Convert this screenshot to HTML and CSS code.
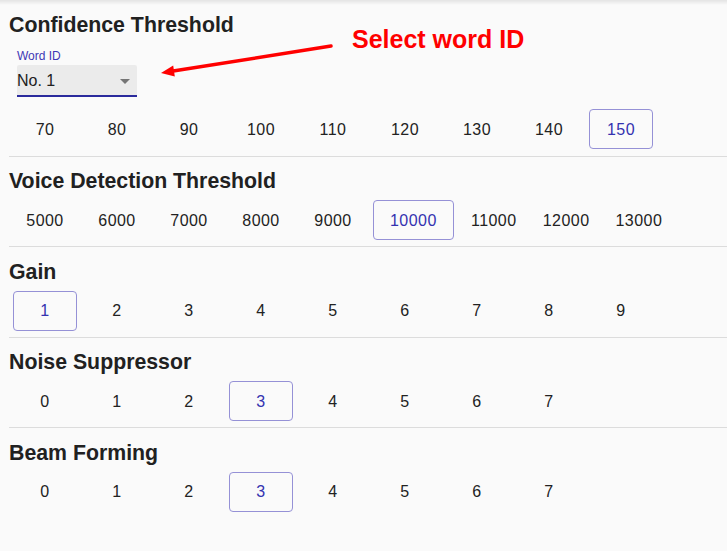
FILE: index.html
```html
<!DOCTYPE html>
<html lang="en">
<head>
<meta charset="utf-8">
<title>Settings</title>
<link rel="stylesheet" href="styles.css">
</head>
<body>
<div class="topshade"></div>
<main class="panel">
  <section class="setting first">
    <h2 class="title">Confidence Threshold</h2>
    <div class="field">
      <span class="field-label">Word ID</span>
      <div class="select">
        <span class="select-value">No. 1</span>
        <svg class="select-icon" width="10" height="5" viewBox="0 0 10 5"><path d="M0 0l5 5 5-5z" fill="#757575"/></svg>
      </div>
    </div>
    <div class="options">
      <button class="opt">70</button>
      <button class="opt">80</button>
      <button class="opt">90</button>
      <button class="opt">100</button>
      <button class="opt">110</button>
      <button class="opt">120</button>
      <button class="opt">130</button>
      <button class="opt">140</button>
      <button class="opt selected">150</button>
    </div>
  </section>
  <hr class="divider">
  <section class="setting">
    <h2 class="title">Voice Detection Threshold</h2>
    <div class="options">
      <button class="opt">5000</button>
      <button class="opt">6000</button>
      <button class="opt">7000</button>
      <button class="opt">8000</button>
      <button class="opt">9000</button>
      <button class="opt selected">10000</button>
      <button class="opt">11000</button>
      <button class="opt">12000</button>
      <button class="opt">13000</button>
    </div>
  </section>
  <hr class="divider">
  <section class="setting">
    <h2 class="title">Gain</h2>
    <div class="options">
      <button class="opt selected">1</button>
      <button class="opt">2</button>
      <button class="opt">3</button>
      <button class="opt">4</button>
      <button class="opt">5</button>
      <button class="opt">6</button>
      <button class="opt">7</button>
      <button class="opt">8</button>
      <button class="opt">9</button>
    </div>
  </section>
  <hr class="divider">
  <section class="setting">
    <h2 class="title">Noise Suppressor</h2>
    <div class="options">
      <button class="opt">0</button>
      <button class="opt">1</button>
      <button class="opt">2</button>
      <button class="opt selected">3</button>
      <button class="opt">4</button>
      <button class="opt">5</button>
      <button class="opt">6</button>
      <button class="opt">7</button>
    </div>
  </section>
  <hr class="divider">
  <section class="setting">
    <h2 class="title">Beam Forming</h2>
    <div class="options">
      <button class="opt">0</button>
      <button class="opt">1</button>
      <button class="opt">2</button>
      <button class="opt selected">3</button>
      <button class="opt">4</button>
      <button class="opt">5</button>
      <button class="opt">6</button>
      <button class="opt">7</button>
    </div>
  </section>
</main>
<div class="annotation">
  <svg class="annotation-arrow" width="727" height="100" viewBox="0 0 727 100">
    <line x1="331" y1="46" x2="170" y2="71.6" stroke="#ff0000" stroke-width="3.5" stroke-linecap="round"/>
    <polygon points="161,73 173.2,65.6 174.8,76.4" fill="#ff0000"/>
  </svg>
  <span class="annotation-text">Select word ID</span>
</div>
</body>
</html>
```

FILE: styles.css
```css
html, body {
  margin: 0;
  padding: 0;
}

body {
  background: #fafafa;
  font-family: "Liberation Sans", Arial, sans-serif;
  color: #212121;
  width: 727px;
  height: 551px;
  overflow: hidden;
  position: relative;
}

.topshade {
  position: absolute;
  left: 0;
  top: 0;
  width: 100%;
  height: 5px;
  background: linear-gradient(rgba(0, 0, 0, 0.09), rgba(0, 0, 0, 0));
  pointer-events: none;
}

.panel {
  padding-left: 9px;
}

.setting {
  padding-top: 12.4px;
  padding-bottom: 6px;
}

.setting.first {
  padding-top: 13.5px;
  padding-bottom: 7px;
}

.title {
  margin: 0;
  font-size: 21.3px;
  line-height: 24px;
  font-weight: 700;
  color: #212121;
}

.setting.first .title {
  line-height: 23.5px;
}

.field {
  margin-top: 12px;
  margin-left: 8px;
  width: 120px;
}

.field-label {
  display: block;
  font-size: 12px;
  line-height: 14px;
  color: #3f37b5;
}

.select {
  margin-top: 2px;
  display: flex;
  align-items: center;
  justify-content: space-between;
  padding: 7px 7px 5px 0;
  height: 18px;
  background: #ebebeb;
  border-bottom: 2px solid #2a2a9c;
  border-radius: 2px 2px 0 0;
}

.select-value {
  font-size: 16px;
  line-height: 18px;
  color: #212121;
}

.select-icon {
  display: block;
  margin-top: 1px;
}

.options {
  display: flex;
  gap: 8px;
  margin-top: 7px;
  margin-left: 4px;
}

.setting.first .options {
  margin-top: 12px;
}

.opt {
  box-sizing: border-box;
  height: 40px;
  min-width: 64px;
  padding: 1px 8px 0;
  border: 1px solid transparent;
  border-radius: 4px;
  background: transparent;
  font-family: "Liberation Sans", Arial, sans-serif;
  font-size: 16px;
  letter-spacing: 0.45px;
  color: #222222;
  display: flex;
  align-items: center;
  justify-content: center;
  cursor: pointer;
}

.opt.selected {
  padding: 1px 16px 0;
  border-color: #9591d6;
  color: #3432b0;
}

.divider {
  margin: 0;
  border: 0;
  height: 1px;
  background: #dcdcdc;
}

.annotation {
  position: absolute;
  left: 0;
  top: 0;
  width: 727px;
  height: 100px;
  pointer-events: none;
}

.annotation-arrow {
  position: absolute;
  left: 0;
  top: 0;
}

.annotation-text {
  position: absolute;
  left: 352px;
  top: 27px;
  font-size: 25px;
  line-height: 25px;
  font-weight: 700;
  color: #ff0000;
  white-space: nowrap;
}
```
